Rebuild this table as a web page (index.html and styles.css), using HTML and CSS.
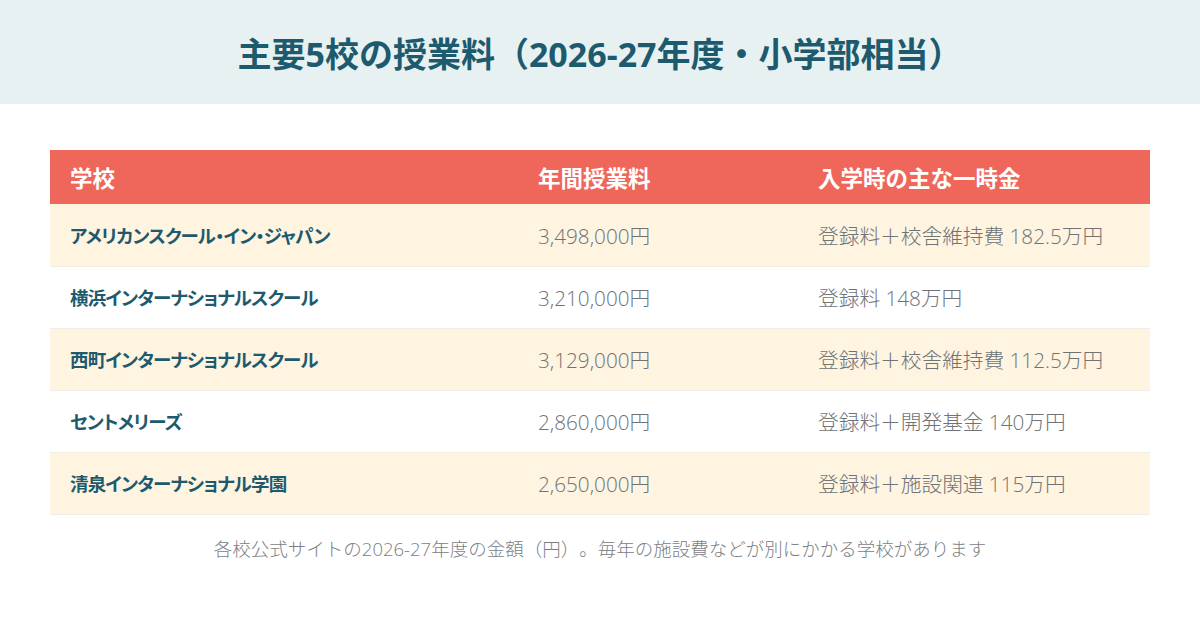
FILE: index.html
```html
<!DOCTYPE html>
<html lang="ja">
<head>
<meta charset="utf-8">
<link rel="stylesheet" href="styles.css">
</head>
<body>
<header class="banner">
  <h1 class="title">主要5校の授業料（2026-27年度・小学部相当）</h1>
</header>
<main class="content">
  <table class="fees">
    <thead>
      <tr><th class="c1">学校</th><th class="c2">年間授業料</th><th class="c3">入学時の主な一時金</th></tr>
    </thead>
    <tbody>
      <tr class="alt"><td class="name">アメリカンスクール・イン・ジャパン</td><td class="val">3,498,000円</td><td class="val">登録料＋校舎維持費 182.5万円</td></tr>
      <tr><td class="name">横浜インターナショナルスクール</td><td class="val">3,210,000円</td><td class="val">登録料 148万円</td></tr>
      <tr class="alt"><td class="name">西町インターナショナルスクール</td><td class="val">3,129,000円</td><td class="val">登録料＋校舎維持費 112.5万円</td></tr>
      <tr><td class="name">セントメリーズ</td><td class="val">2,860,000円</td><td class="val">登録料＋開発基金 140万円</td></tr>
      <tr class="alt"><td class="name">清泉インターナショナル学園</td><td class="val">2,650,000円</td><td class="val">登録料＋施設関連 115万円</td></tr>
    </tbody>
  </table>
  <p class="note">各校公式サイトの2026-27年度の金額（円）。毎年の施設費などが別にかかる学校があります</p>
</main>
</body>
</html>
```
FILE: styles.css
```css
* { box-sizing: border-box; }
html, body { margin: 0; padding: 0; }
body {
  width: 1200px;
  height: 640px;
  background: #ffffff;
  font-family: "Open Sans", "Noto Sans CJK JP", sans-serif;
  overflow: hidden;
  text-spacing-trim: space-all;
}
.banner {
  height: 104px;
  background: #e8f1f2;
  display: flex;
  align-items: center;
  justify-content: center;
}
.title {
  margin: 0;
  font-size: 34px;
  font-weight: 700;
  color: #1d5a6e;
}
.content {
  padding: 46px 50px 0;
}
.fees {
  width: 1100px;
  border-collapse: collapse;
  table-layout: fixed;
}
.fees th {
  height: 54px;
  background: #ef665b;
  color: #ffffff;
  text-align: left;
  font-size: 22.5px;
  font-weight: 700;
  padding: 0 20px;
}
.fees th.c1 { width: 468px; }
.fees th.c2 { width: 280px; }
.fees td {
  height: 62px;
  padding: 0 20px;
  font-size: 20.7px;
  border-bottom: 1px solid #f1ede4;
}
.fees tr.alt td { background: #fef4e0; }
.fees td.name {
  color: #1d5a6e;
  font-size: 18.5px;
  font-weight: 700;
  letter-spacing: -0.8px;
  font-feature-settings: "palt";
}
.fees td.val { color: #6f7378; font-weight: 300; }
.note {
  margin: 20px 0 0;
  text-align: center;
  font-size: 18.5px;
  font-weight: 300;
  color: #7c8085;
}
```
